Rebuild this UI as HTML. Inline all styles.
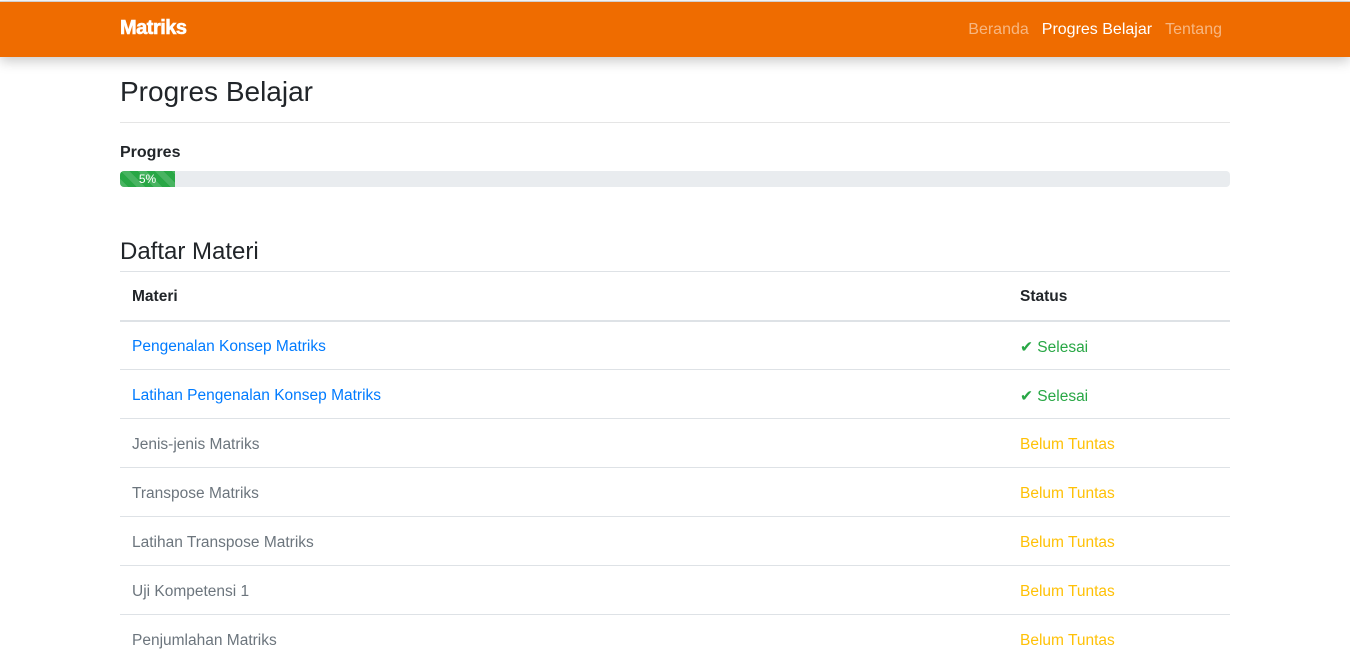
<!DOCTYPE html>
<html><head><style>
body{margin:0;font-family:"Liberation Sans",sans-serif;background:#fff;color:#212529;width:1350px;height:658px;overflow:hidden;position:relative}
.nav{position:absolute;top:1px;left:0;width:1350px;height:56px;background:#ef6c00;box-shadow:0 4px 12px rgba(0,0,0,.22);border-top:1px solid #d0d0d0;box-sizing:border-box}
.brand{position:absolute;left:120px;top:15px;color:#fff;font-weight:900;font-size:20px;letter-spacing:-0.5px;-webkit-text-stroke:0.6px #fff}
.links{position:absolute;right:128px;top:19px;font-size:16px}
.links span{margin-left:13px;color:rgba(255,255,255,.5)}
.links .a{color:#fff}
.c{position:absolute;left:120px;width:1110px}
h1{font-weight:normal;font-size:28px;margin:0}
.bar{height:16px;background:#e9ecef;border-radius:4px;overflow:hidden}
.fill{width:55px;height:16px;background:#28a745 repeating-linear-gradient(45deg,rgba(255,255,255,.15) 0 6px,transparent 6px 12px);color:#fff;font-size:12px;text-align:center;line-height:16px}
table{border-collapse:collapse;width:1110px;font-size:15.5px}
td,th{height:49px;padding:4px 12px 0;border-top:1px solid #dee2e6;text-align:left;box-sizing:border-box}
th{border-bottom:2px solid #dee2e6;height:49px;padding-top:2px}
.l{color:#007bff}.g{color:#28a745}.y{color:#ffc107}.m{color:#6c757d}
</style></head><body>
<div class="nav"><div class="brand">Matriks</div><div class="links"><span>Beranda</span><span class="a">Progres Belajar</span><span>Tentang</span></div></div>
<div class="c" style="top:76px"><h1>Progres Belajar</h1></div>
<div class="c" style="top:122px;border-top:1px solid #e5e5e5"></div>
<div class="c" style="top:144px;font-weight:bold;font-size:16px">Progres</div>
<div class="c" style="top:171px"><div class="bar"><div class="fill">5%</div></div></div>
<div class="c" style="top:238px"><h1 style="font-size:24px">Daftar Materi</h1></div>
<div class="c" style="top:271px"><table>
<tr><th style="width:888px">Materi</th><th>Status</th></tr>
<tr><td class="l">Pengenalan Konsep Matriks</td><td class="g">✔ Selesai</td></tr>
<tr><td class="l">Latihan Pengenalan Konsep Matriks</td><td class="g">✔ Selesai</td></tr>
<tr><td class="m">Jenis-jenis Matriks</td><td class="y">Belum Tuntas</td></tr>
<tr><td class="m">Transpose Matriks</td><td class="y">Belum Tuntas</td></tr>
<tr><td class="m">Latihan Transpose Matriks</td><td class="y">Belum Tuntas</td></tr>
<tr><td class="m">Uji Kompetensi 1</td><td class="y">Belum Tuntas</td></tr>
<tr><td class="m">Penjumlahan Matriks</td><td class="y">Belum Tuntas</td></tr>
</table></div>
</body></html>
